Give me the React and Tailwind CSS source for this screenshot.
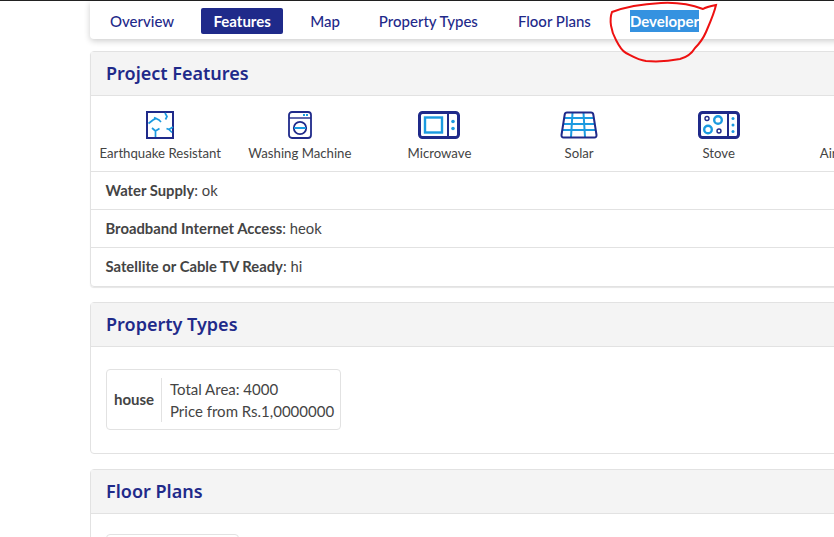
const NAVY = "#1f2a8a";
const BLUE = "#1b9ae0";

function Quake() {
  return (
    <svg width="28" height="28" viewBox="0 0 28 28" fill="none">
      <rect x="1" y="1" width="26" height="26" fill="#fff" stroke={NAVY} strokeWidth="2" />
      <path d="M2.500 12.500L7 9l3-1.500 3 1.500 2 2M10 7.500l-2-1M19 2l2 3.500-1.500 3M27 16l-4 2.500 3 3M23 18.500l-2.500-1M9.500 26l0-6-3.500-3M9.500 20l4-2.500" stroke={BLUE} strokeWidth="1.700" />
    </svg>
  );
}
function Washer() {
  return (
    <svg width="24" height="28" viewBox="0 0 24 28" fill="none">
      <rect x="1" y="1" width="22" height="26" rx="3" stroke={NAVY} strokeWidth="1.800" />
      <path d="M1 7h22" stroke={NAVY} strokeWidth="1.400" />
      <rect x="15" y="3" width="2" height="2" fill={BLUE} />
      <rect x="18" y="3" width="2" height="2" fill={BLUE} />
      <circle cx="12" cy="17" r="6.200" stroke={NAVY} strokeWidth="1.800" />
      <path d="M6 17h12" stroke={BLUE} strokeWidth="2" />
    </svg>
  );
}
function Microwave() {
  return (
    <svg width="42" height="28" viewBox="0 0 42 28" fill="none">
      <rect x="1.500" y="1.500" width="39" height="25" rx="3" stroke={NAVY} strokeWidth="3" />
      <path d="M30 2v24" stroke={NAVY} strokeWidth="2" />
      <rect x="7" y="6.500" width="17" height="15" stroke={BLUE} strokeWidth="2.400" />
      <circle cx="35" cy="10.500" r="1.800" fill={BLUE} />
      <circle cx="35" cy="17.500" r="1.800" fill={BLUE} />
    </svg>
  );
}
function Solar() {
  return (
    <svg width="38" height="28" viewBox="0 0 38 28" fill="none">
      <path d="M4 7h30M3 13h32M2 19h34M12.500 2l-1.500 24M23.500 2l1.500 24" stroke={BLUE} strokeWidth="2" />
      <path d="M7 1.500h24c1 0 2 .5 2.300 2L36.500 24c.2 1.500-.8 2.500-2 2.500h-31c-1.200 0-2.200-1-2-2.500L4.700 3.500c.3-1.500 1.300-2 2.300-2z" stroke={NAVY} strokeWidth="2" />
    </svg>
  );
}
function Stove() {
  return (
    <svg width="42" height="28" viewBox="0 0 42 28" fill="none">
      <rect x="1.500" y="1.500" width="39" height="25" rx="3" stroke={NAVY} strokeWidth="3" />
      <path d="M30 2v24" stroke={NAVY} strokeWidth="2" />
      <circle cx="9" cy="7.500" r="2" stroke={NAVY} strokeWidth="1.400" />
      <circle cx="20" cy="9" r="3.800" stroke={BLUE} strokeWidth="2.400" />
      <circle cx="10" cy="18.500" r="3.800" stroke={BLUE} strokeWidth="2.400" />
      <circle cx="21" cy="20" r="2" stroke={NAVY} strokeWidth="1.400" />
      <circle cx="35" cy="7.500" r="1.500" fill={BLUE} />
      <circle cx="35" cy="14" r="1.500" fill={BLUE} />
      <circle cx="35" cy="20.500" r="1.500" fill={BLUE} />
    </svg>
  );
}

const features = [
  ["Earthquake Resistant", <Quake />],
  ["Washing Machine", <Washer />],
  ["Microwave", <Microwave />],
  ["Solar", <Solar />],
  ["Stove", <Stove />],
  ["Air Condition", <span className="block h-7" />],
];

function Header({ children }) {
  return (
    <div className="h-[44px] pb-[1px] bg-[#f4f4f4] border-b border-[#e2e2e2] flex items-center pl-[15px] text-[18px] font-semibold text-[#1f2a8a] [font-family:'Noto_Sans',sans-serif]">
      {children}
    </div>
  );
}

function Row({ label, value, last }) {
  return (
    <div className={"h-[38px] flex items-center pl-[14.500px] pb-[1px] text-[14.800px] text-[#444] " + (last ? "" : "border-b border-[#e2e2e2]")}>
      <span><b className="font-bold">{label}</b>: {value}</span>
    </div>
  );
}

export default function App() {
  return (
    <div className="relative h-[537px] w-[834px] overflow-hidden bg-white [font-family:Lato,sans-serif]">
      <div className="h-px bg-[#222]" />
      <div className="ml-[90px] w-[1000px]">
        <nav className="h-[38px] pt-[2px] rounded-b bg-white shadow-[0_2px_6px_rgba(0,0,0,0.2)] flex items-center text-[15px] font-medium text-[#1f2a8a] pl-[8px]">
          <span className="px-[12px]">Overview</span>
          <span className="ml-[15px] h-[26px] w-[82px] rounded-[2px] bg-[#1f2a8a] text-white font-bold flex items-center justify-center">Features</span>
          <span className="ml-[15px] px-[12px]">Map</span>
          <span className="ml-[15px] px-[12px]">Property Types</span>
          <span className="ml-[16px] px-[12px]">Floor Plans</span>
          <span className="ml-[15px] px-[12px]"><span className="bg-[#3592e0] text-white py-[2px] font-bold">Developer</span></span>
        </nav>

        <section className="mt-[12px] rounded border border-[#e2e2e2] shadow-[0_1px_1px_rgba(0,0,0,0.1)]">
          <Header>Project Features</Header>
          <div className="flex h-[76px] border-b border-[#e2e2e2] -ml-[0.500px]">
            {features.map(([name, icon]) => (
              <div key={name} className="w-[139.600px] shrink-0 flex flex-col items-center pt-[15px]">
                <div className="h-[28px]">{icon}</div>
                <div className="mt-[5px] text-[13.200px] whitespace-nowrap text-[#444]">{name}</div>
              </div>
            ))}
          </div>
          <Row label="Water Supply" value="ok" />
          <Row label="Broadband Internet Access" value="heok" />
          <Row label="Satellite or Cable TV Ready" value="hi" last />
        </section>

        <section className="mt-[15px] h-[152px] rounded border border-[#e2e2e2]">
          <Header>Property Types</Header>
          <div className="pl-[15px] pt-[22px]">
            <div className="w-[235px] h-[61px] rounded border border-[#e2e2e2] flex items-center text-[15px] text-[#444]">
              <div className="w-[55px] h-[44px] border-r border-[#e2e2e2] flex items-center justify-center font-bold">house</div>
              <div className="pl-[8px] leading-[22px] whitespace-nowrap">
                <div>Total Area: 4000</div>
                <div>Price from Rs.1,0000000</div>
              </div>
            </div>
          </div>
        </section>

        <section className="mt-[15px] h-[120px] rounded border border-[#e2e2e2]">
          <Header>Floor Plans</Header>
          <div className="pl-[15px] pt-[20px]">
            <div className="w-[133px] h-[40px] rounded border border-[#e2e2e2]" />
          </div>
        </section>
      </div>

      <svg className="absolute left-0 top-0 pointer-events-none" width="834" height="537" fill="none">
        <path d="M716 5c-5 1-10 2-13 4-8-3-24-7-42-6-18 1-36 4-49 9-3 8-1 19 4 28 3 6 6 11 10 13 6 3 12 7 20 8 12 1 24 0 34-2 8-2 12-6 15-11 4-4 8-9 11-16 3-7 8-18 10-27z" stroke="#ee1111" strokeWidth="2" />
      </svg>
    </div>
  );
}
